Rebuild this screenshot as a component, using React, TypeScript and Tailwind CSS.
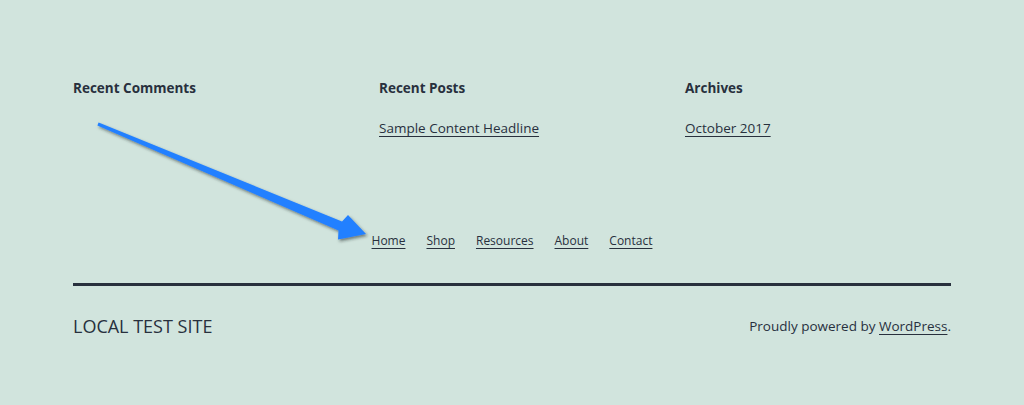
const widgets = [
  { title: "Recent Comments", link: "" },
  { title: "Recent Posts", link: "Sample Content Headline" },
  { title: "Archives", link: "October 2017" },
];

const menu = ["Home", "Shop", "Resources", "About", "Contact"];

function Arrow() {
  return (
    <svg className="pointer-events-none absolute inset-0" width="1024" height="405" viewBox="0 0 1024 405">
      <defs>
        <filter id="shadow" x="-10%" y="-10%" width="120%" height="130%">
          <feDropShadow dx="1.5" dy="2" stdDeviation="1.5" floodColor="#1b2a2a" floodOpacity="0.55" />
        </filter>
      </defs>
      <polygon
        points="98.6,122.6 342,221.5 348,215 366,234 338,239.5 338.5,230.5 97.4,125.4"
        fill="#2380ff"
        filter="url(#shadow)"
      />
    </svg>
  );
}

export default function App() {
  return (
    <div className="relative h-[405px] w-[1024px] overflow-hidden bg-[#d1e4dd] font-['Open_Sans',sans-serif] text-[#28303d]">
      <div className="mx-[73px] pt-[78px]">
        <div className="grid grid-cols-3 gap-x-10">
          {widgets.map((w) => (
            <div key={w.title}>
              <h2 className="text-[13.5px] leading-[20px] font-bold">{w.title}</h2>
              {w.link && (
                <a href="#" className="mt-[20px] block text-[13.5px] leading-[20px] underline decoration-1 underline-offset-[3px]">
                  {w.link}
                </a>
              )}
            </div>
          ))}
        </div>
        <nav className="mt-[93px] flex justify-center gap-[21px] text-[12px] leading-[20px]">
          {menu.map((m) => (
            <a key={m} href="#" className="underline decoration-1 underline-offset-[3px]">
              {m}
            </a>
          ))}
        </nav>
        <hr className="mt-[32px] border-t-[3px] border-[#28303d]" />
        <div className="mt-[28px] flex items-center justify-between">
          <span className="text-[18px] leading-[24px]">LOCAL TEST SITE</span>
          <span className="text-[13.5px] leading-[20px]">
            Proudly powered by{" "}
            <a href="#" className="underline decoration-1 underline-offset-[3px]">
              WordPress
            </a>
            .
          </span>
        </div>
      </div>
      <Arrow />
    </div>
  );
}
